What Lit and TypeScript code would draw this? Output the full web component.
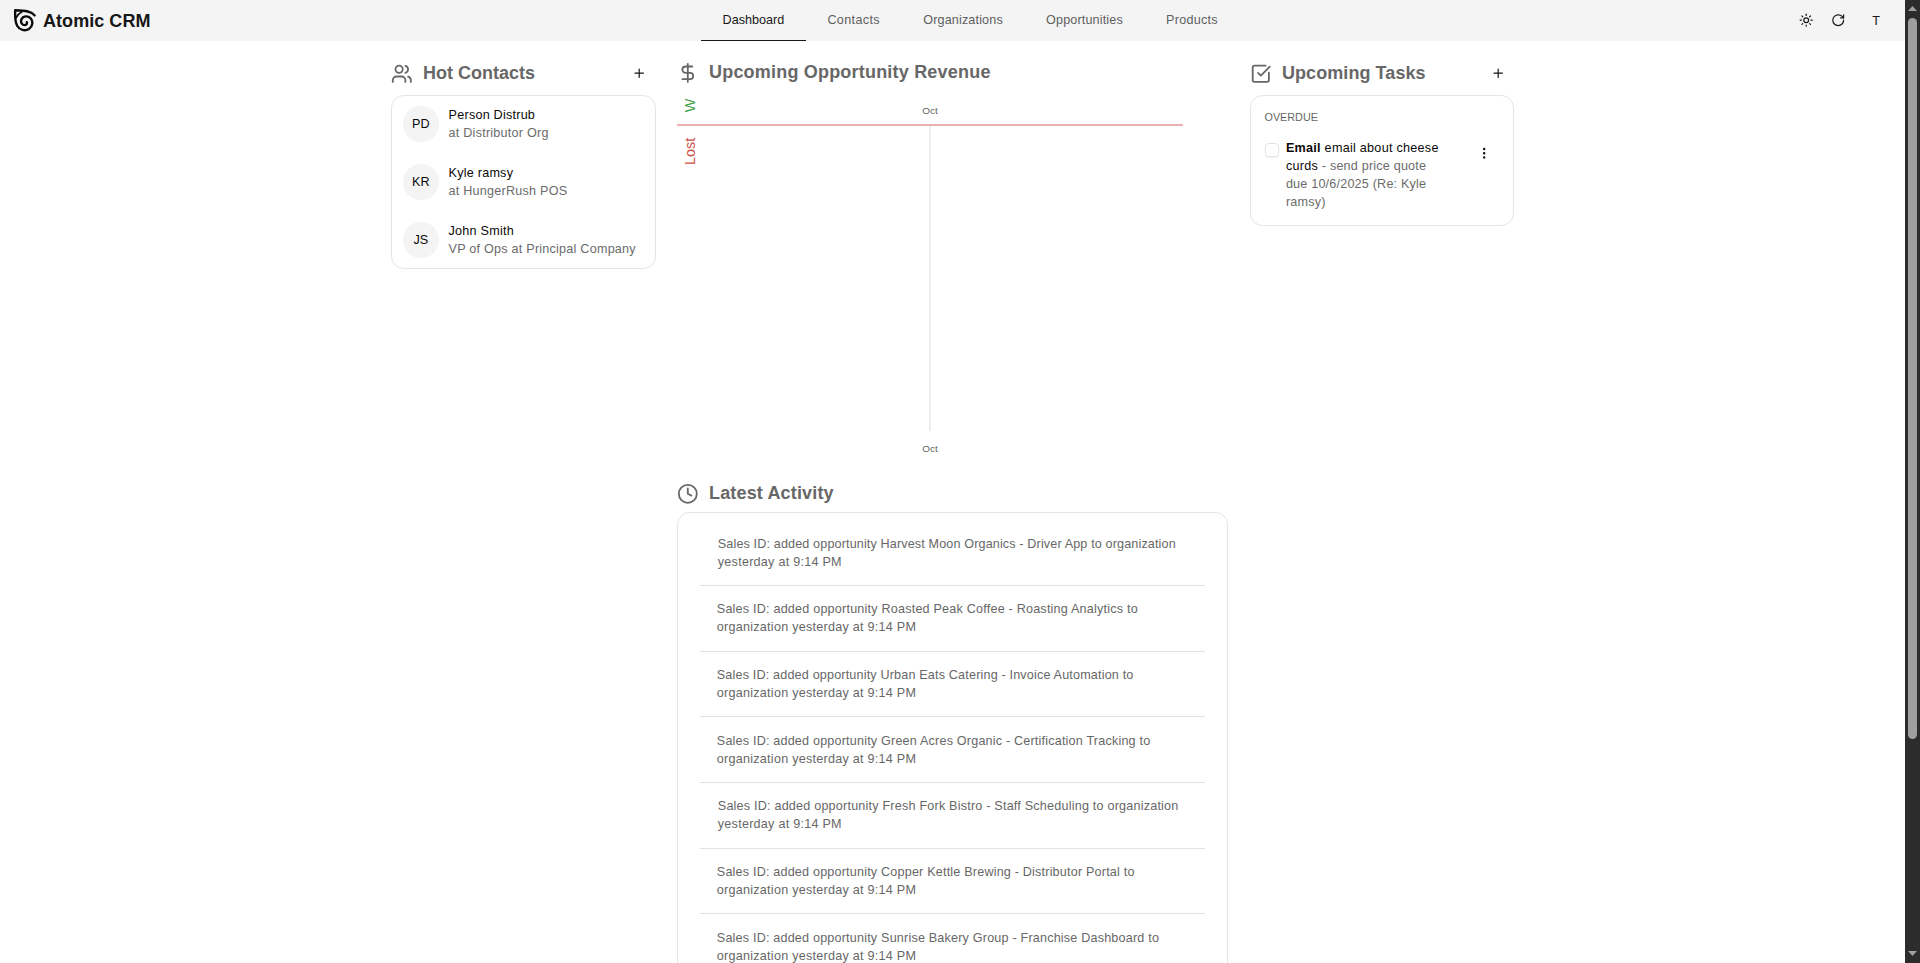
import { LitElement, html, css, svg } from "lit";
import { customElement } from "lit/decorators.js";

const icon = (body: unknown, size: number, cls = "") => html`
  <svg class="icon ${cls}" width=${size} height=${size} viewBox="0 0 24 24" fill="none"
    stroke="currentColor" stroke-width="2" stroke-linecap="round" stroke-linejoin="round">${body}</svg>`;

const users = svg`<path d="M16 21v-2a4 4 0 0 0-4-4H6a4 4 0 0 0-4 4v2"/><path d="M16 3.128a4 4 0 0 1 0 7.744"/><path d="M22 21v-2a4 4 0 0 0-3-3.87"/><circle cx="9" cy="7" r="4"/>`;
const dollar = svg`<line x1="12" x2="12" y1="2" y2="22"/><path d="M17 5H9.5a3.5 3.5 0 0 0 0 7h5a3.5 3.5 0 0 1 0 7H6"/>`;
const clock = svg`<circle cx="12" cy="12" r="10"/><path d="M12 6v6l4 2"/>`;
const check = svg`<path d="M21 10.656V19a2 2 0 0 1-2 2H5a2 2 0 0 1-2-2V5a2 2 0 0 1 2-2h12.344"/><path d="m9 11 3 3L22 4"/>`;
const plus = svg`<path d="M5 12h14"/><path d="M12 5v14"/>`;
const dots = svg`<circle cx="12" cy="12" r="1"/><circle cx="12" cy="5" r="1"/><circle cx="12" cy="19" r="1"/>`;
const sun = svg`<circle cx="12" cy="12" r="4"/><path d="M12 2v2"/><path d="M12 20v2"/><path d="m4.93 4.93 1.41 1.41"/><path d="m17.66 17.66 1.41 1.41"/><path d="M2 12h2"/><path d="M20 12h2"/><path d="m6.34 17.66-1.41 1.41"/><path d="m19.07 4.93-1.41 1.41"/>`;
const rotate = svg`<path d="M21 12a9 9 0 1 1-9-9c2.52 0 4.93 1 6.74 2.74L21 8"/><path d="M21 3v5h-5"/>`;

const tabs = ["Dashboard", "Contacts", "Organizations", "Opportunities", "Products"];
const contacts = [
  ["PD", "Person Distrub", "at Distributor Org"],
  ["KR", "Kyle ramsy", "at HungerRush POS"],
  ["JS", "John Smith", "VP of Ops at Principal Company"],
];
const activity: [string, string, boolean][] = [
  ["Harvest Moon Organics - Driver App", "a", true],
  ["Roasted Peak Coffee - Roasting Analytics", "b", false],
  ["Urban Eats Catering - Invoice Automation", "c", false],
  ["Green Acres Organic - Certification Tracking", "d", false],
  ["Fresh Fork Bistro - Staff Scheduling", "e", true],
  ["Copper Kettle Brewing - Distributor Portal", "f", false],
  ["Sunrise Bakery Group - Franchise Dashboard", "g", false],
];

@customElement("app-root")
export class AppRoot extends LitElement {
  static styles = css`
    :host { display: flex; height: 963px; overflow: hidden; background: #fff; color: #0a0a0a;
      font: 12.6px/18px "Liberation Sans", Arial, sans-serif; }
    * { box-sizing: border-box; }
    .icon { display: block; flex: none; }
    .page { flex: 1; min-width: 0; height: 963px; overflow: hidden; }
    header { display: grid; grid-template-columns: 701px 1fr auto; height: 41px; background: #f4f4f4; }
    .brand { display: flex; align-items: center; padding-left: 13px; gap: 7px; color: #171717;
      font-size: 18px; font-weight: 700; letter-spacing: .05px; }
    .brand svg { display: block; }
    nav { display: flex; }
    .tab { display: flex; align-items: center; padding: 0 21.6px; color: #5f5f5f;
      border-bottom: 1px solid transparent; letter-spacing: .15px; }
    .tab.on { color: #171717; border-color: #171717; letter-spacing: 0; }
    .tab.t1 { letter-spacing: .36px; }
    .tab.t4 { letter-spacing: .25px; }
    .tools { display: flex; align-items: center; padding-right: 25px; color: #171717; }
    .tools .sun { margin-right: 17.6px; }
    .tools .user { margin-left: 27px; line-height: 18px; }
    main { display: grid; grid-template-columns: 265px 551px 265px; column-gap: 21px;
      align-items: start; padding-left: 391px; }
    .head { display: flex; align-items: center; height: 25px; color: #676767; }
    .head h2 { flex: 1; margin: 0 0 0 10.4px; font-size: 18px; line-height: 25px; font-weight: 700; }
    .side .head { margin: 20px 0 9px; padding-right: 9.5px; }
    .right { padding-left: 1px; }
    .right h2 { letter-spacing: .07px; }
    .side.right .head { padding-right: 8.8px; }
    .add { color: #171717; }
    .card { border: 1px solid #e5e5e5; border-radius: 12.6px; }
    .people { display: flex; flex-direction: column; justify-content: center; height: 174px; }
    .contact { display: flex; flex: none; align-items: center; gap: 9.8px; height: 58px;
      padding: 0 0 0 10.8px; letter-spacing: .23px; }
    .avatar { display: flex; align-items: center; justify-content: center; width: 36px; height: 36px;
      border-radius: 50%; background: #f4f4f4; letter-spacing: 0; }
    .muted { color: #6b6b6b; }
    .mid .head.rev { margin-top: 19px; }
    .wide h2 { letter-spacing: .2px; }
    .chart { display: block; margin-top: 1px; }
    .chart text { font-family: "Liberation Sans", Arial, sans-serif; }
    .mid .head.act { margin: 20px 0 6px; }
    .act h2 { letter-spacing: .16px; }
    .feed { padding: 7.3px 22px 0; height: 600px; }
    .event { height: 65.65px; padding: 14.4px 0 0 16.8px; border-bottom: 1px solid #e2e2e2; color: #676767;
      white-space: nowrap; letter-spacing: .19px; }
    .event.fit { padding-left: 17.8px; }
    .event .when { letter-spacing: .25px; }
    .e-a { letter-spacing: .137px; }
    .e-c { letter-spacing: .17px; }
    .e-b, .e-e { letter-spacing: .205px; }
    .tasks { height: 131px; padding: 12px 14px 0 13.5px; }
    .label { font-size: 10.8px; line-height: 18px; color: #676767; }
    .task { display: flex; margin-top: 13px; }
    .box { flex: none; width: 14.4px; height: 14.4px; margin-top: 4px; border: 1px solid #e2e2e2;
      border-radius: 3.6px; box-shadow: 0 1px 2px rgba(0,0,0,.05); }
    .what { flex: 1; margin-left: 7px; white-space: nowrap; letter-spacing: .27px; }
    .what .muted { letter-spacing: .2px; }
    .more { margin: 6.5px 7.7px 0 0; }
    .bar { flex: none; display: flex; flex-direction: column; align-items: center; width: 15px;
      height: 963px; padding: 6px 0 7px; background: #2c2c2c; }
    .thumb { width: 9px; height: 721px; margin-top: 7px; border-radius: 5px; background: #9f9f9f; }
    .bar svg { display: block; }
    .grow { flex: 1; }
  `;

  render() {
    return html`
      <div class="page">
        <header>
          <div class="brand">
            <svg width="23" height="23" viewBox="0 0 23 23" fill="none" stroke="#0a0a0a" stroke-width="2.4" stroke-linecap="round" stroke-linejoin="round">
              <path d="M21.6 6.4C18.6 2.4 13 1.6 2.2 1.3C1.9 8 2.3 13.6 4.3 17C6.6 21 12 22.4 15.9 20C19.9 17.4 20.3 12.3 17.6 9.3C14.8 6.3 10 6.9 8.5 10.3C7.3 13.2 8.9 16 11.4 16.1C13.3 16.1 14.4 14.6 13.8 13.2"/>
              <path d="M3 8.8C4.2 6.4 5.6 4.6 8.6 3" stroke-width="1.9"/>
            </svg>
            <span>Atomic CRM</span>
          </div>
          <nav>${tabs.map((t, i) => html`<div class="tab t${i} ${i ? "" : "on"}">${t}</div>`)}</nav>
          <div class="tools">${icon(sun, 14.4, "sun")}${icon(rotate, 14.4)}<span class="user">T</span></div>
        </header>
        <main>
          <section class="side">
            <div class="head">${icon(users, 21.6)}<h2>Hot Contacts</h2>${icon(plus, 14.4, "add")}</div>
            <div class="card people">
              ${contacts.map(([a, n, o]) => html`<div class="contact"><div class="avatar">${a}</div>
                <div><div>${n}</div><div class="muted">${o}</div></div></div>`)}
            </div>
          </section>
          <section class="mid">
            <div class="head rev wide">${icon(dollar, 21.6)}<h2>Upcoming Opportunity Revenue</h2></div>
            <svg class="chart" width="550" height="375" viewBox="0 0 550 375">
              <text x="253" y="28" font-size="9.9" text-anchor="middle" fill="#5f5f5f">Oct</text>
              <text x="253" y="366" font-size="9.9" text-anchor="middle" fill="#5f5f5f">Oct</text>
              <rect x="252" y="40" width="2" height="305" fill="#eeeeee"/>
              <rect x="0" y="38" width="506" height="2" fill="#e8b0b0"/>
              <text transform="translate(18 26.3) rotate(-90)" font-size="14.4" fill="#43a047">W</text>
              <text transform="translate(18 79) rotate(-90)" font-size="14.4" fill="#cf4f45">Lost</text>
            </svg>
            <div class="head act">${icon(clock, 21.6)}<h2>Latest Activity</h2></div>
            <div class="card feed">
              ${activity.map(([n, k, fit]) => html`<div class="event ${fit ? "fit" : ""}"><span class="e-${k}">Sales ID: added opportunity ${n} to${fit ? " organization" : ""}</span><br><span class="when">${fit ? "" : "organization "}yesterday at 9:14 PM</span></div>`)}
            </div>
          </section>
          <section class="side right">
            <div class="head">${icon(check, 21.6)}<h2>Upcoming Tasks</h2>${icon(plus, 14.4, "add")}</div>
            <div class="card tasks">
              <div class="label">OVERDUE</div>
              <div class="task"><span class="box"></span>
                <div class="what"><b>Email</b> email about cheese<br>curds <span class="muted">- send price quote<br>due 10/6/2025 (Re: Kyle<br>ramsy)</span></div>
                <div class="more">${icon(dots, 14.4)}</div>
              </div>
            </div>
          </section>
        </main>
      </div>
      <div class="bar">
        <svg width="9" height="5"><path d="M0 5L4.5 0L9 5Z" fill="#9f9f9f"/></svg>
        <div class="thumb"></div><div class="grow"></div>
        <svg width="9" height="5"><path d="M0 0L4.5 5L9 0Z" fill="#9f9f9f"/></svg>
      </div>`;
  }
}
